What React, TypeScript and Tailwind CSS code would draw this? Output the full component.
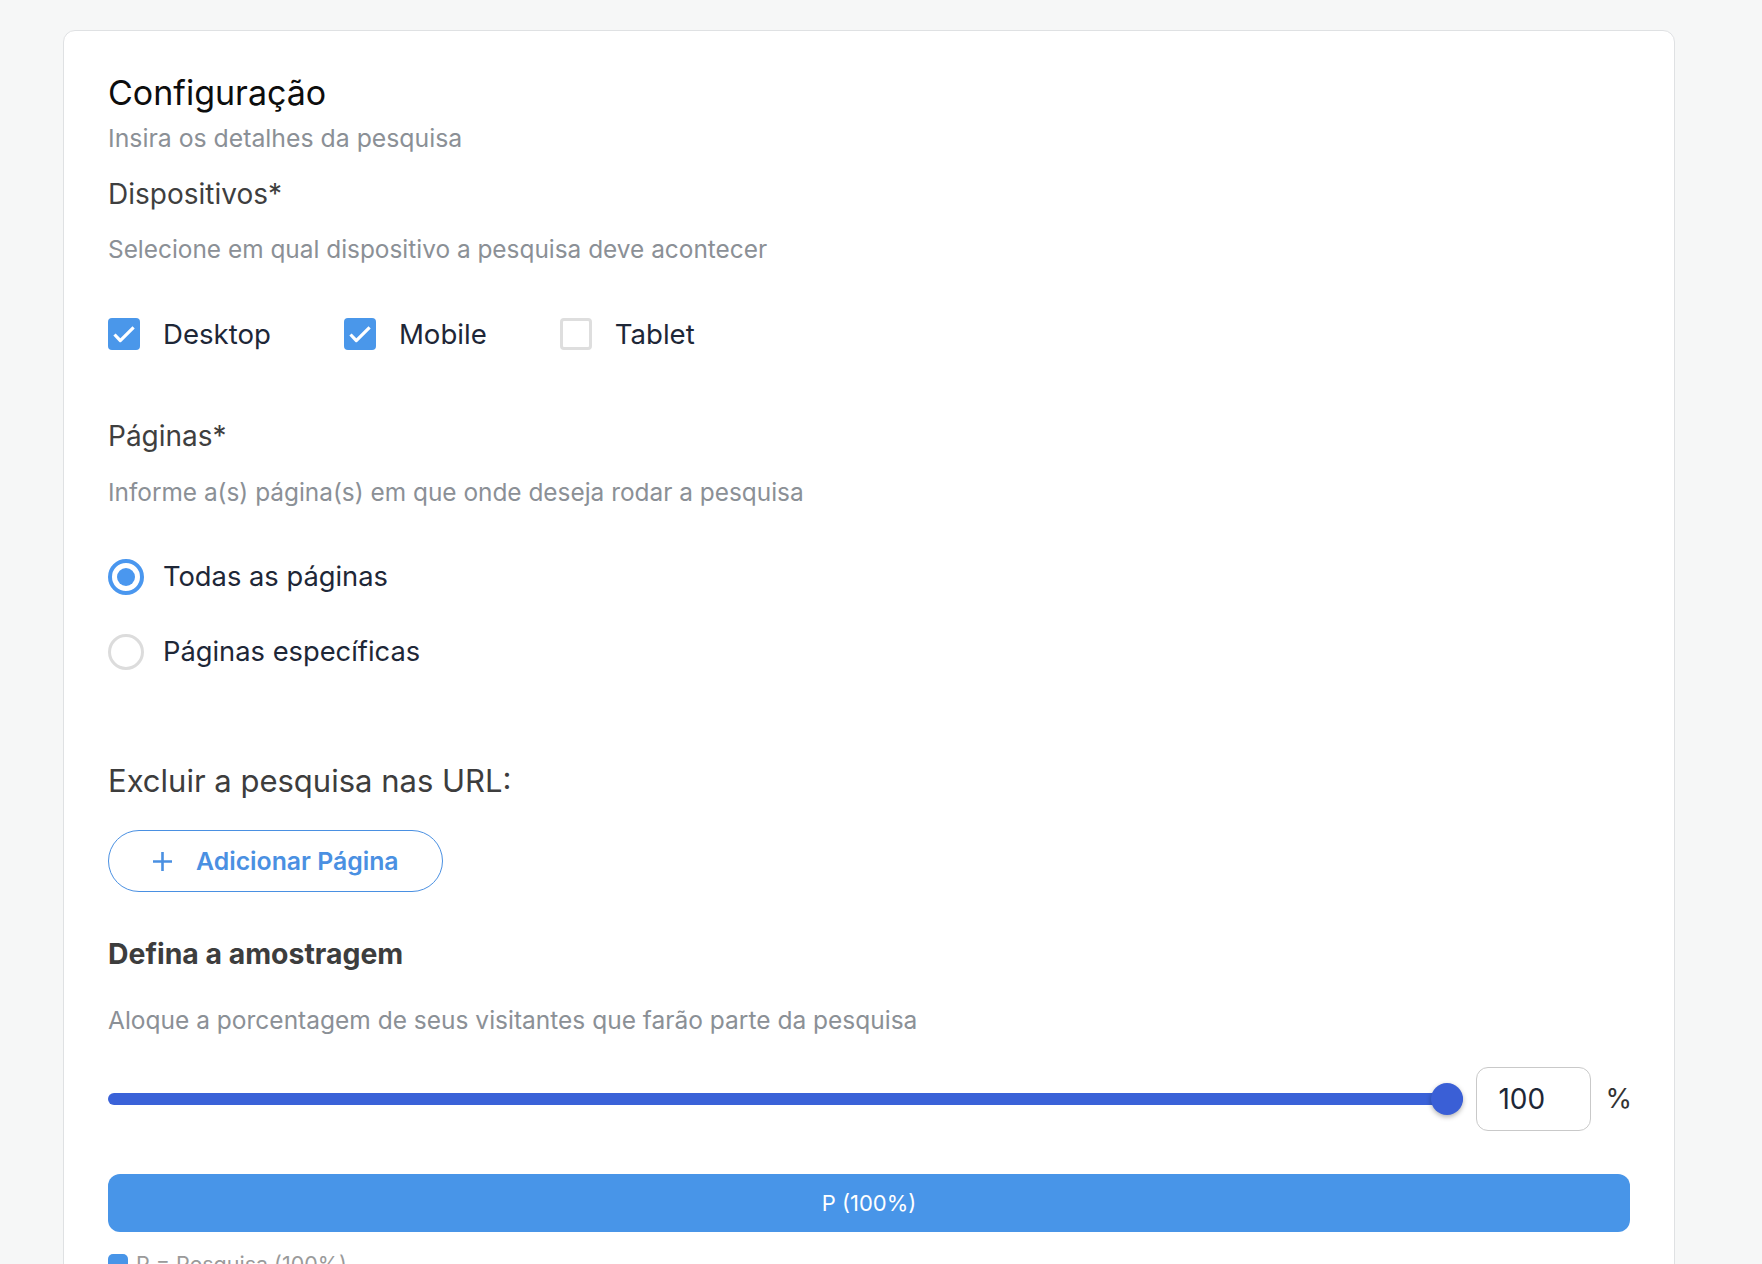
import { useState } from "react";

const font = { fontFamily: "Inter, 'Noto Sans', sans-serif" };

function Check({ checked, label }: { checked: boolean; label: string }) {
  return (
    <label className="flex items-center gap-[23px]">
      {checked ? (
        <span className="flex h-[32px] w-[32px] items-center justify-center rounded-[4px] bg-[#4a97ea]">
          <svg width="32" height="32" viewBox="0 0 32 32" fill="none">
            <path d="M6.5 16.5 12.3 22.6 25.6 9.4" stroke="#fff" strokeWidth="3.2" strokeLinejoin="round" />
          </svg>
        </span>
      ) : (
        <span className="h-[32px] w-[32px] rounded-[4px] border-[3px] border-[#dedede] bg-white" />
      )}
      <span className="text-[27.6px] leading-[32px] text-[#1e2737]">{label}</span>
    </label>
  );
}

function Radio({ selected, label }: { selected: boolean; label: string }) {
  return (
    <label className="flex h-[36px] items-center gap-[19px]">
      {selected ? (
        <span className="flex h-[36px] w-[36px] items-center justify-center rounded-full border-[4px] border-[#4a97ef] bg-white">
          <span className="h-[18px] w-[18px] rounded-full bg-[#4a97ef]" />
        </span>
      ) : (
        <span className="h-[36px] w-[36px] rounded-full border-[3px] border-[#dcdcdc] bg-white" />
      )}
      <span className="text-[27.3px] leading-[36px] text-[#1e2737]">{label}</span>
    </label>
  );
}

export default function App() {
  const [value] = useState(100);

  return (
    <div className="min-h-screen bg-[#f6f7f7] pt-[30px]" style={font}>
      <div className="ml-[63px] w-[1612px] rounded-[12px] border border-[#dfe1e3] bg-white px-[44px] pt-[42px] pb-[40px]">
        <h1 className="text-[34px] leading-[40px] text-[#0d0d0d]">Configuração</h1>
        <p className="mt-[9px] text-[24.8px] leading-[32px] text-[#8b9096]">Insira os detalhes da pesquisa</p>

        <h2 className="mt-[22px] text-[28px] leading-[36px] text-[#3f3f3f]">Dispositivos*</h2>
        <p className="mt-[21px] text-[24.4px] leading-[32px] text-[#8b9096]">
          Selecione em qual dispositivo a pesquisa deve acontecer
        </p>
        <div className="mt-[53px] flex h-[32px] items-center gap-[73px]">
          <Check checked label="Desktop" />
          <Check checked label="Mobile" />
          <Check checked={false} label="Tablet" />
        </div>

        <h2 className="mt-[68px] text-[28px] leading-[36px] text-[#3f3f3f]">Páginas*</h2>
        <p className="mt-[22px] text-[24.4px] leading-[32px] text-[#8b9096]">
          Informe a(s) página(s) em que onde deseja rodar a pesquisa
        </p>
        <div className="mt-[51px] flex flex-col gap-[39px]">
          <Radio selected label="Todas as páginas" />
          <Radio selected={false} label="Páginas específicas" />
        </div>

        <h2 className="mt-[91px] text-[31px] leading-[40px] text-[#3d3d3d]">Excluir a pesquisa nas URL:</h2>
        <button className="mt-[29px] flex h-[62px] items-center gap-[23px] rounded-full border-[1.5px] border-[#4a90e2] pl-[43px] pr-[43px]">
          <svg width="21" height="21" viewBox="0 0 21 21" fill="none">
            <path d="M10.5 1v19M1 10.5h19" stroke="#4a90e2" strokeWidth="2.6" />
          </svg>
          <span className="text-[24.8px] font-semibold leading-[32px] text-[#4a90e2]">Adicionar Página</span>
        </button>

        <h2 className="mt-[44px] text-[28.4px] font-bold leading-[36px] text-[#3d3d3d]">Defina a amostragem</h2>
        <p className="mt-[32px] text-[24.5px] leading-[32px] text-[#8b9096]">
          Aloque a porcentagem de seus visitantes que farão parte da pesquisa
        </p>

        <div className="mt-[31px] flex h-[64px] items-center">
          <div className="relative flex h-[32px] flex-1 items-center">
            <div className="h-[12px] rounded-full bg-[#3a62d8]" style={{ width: `${value}%` }} />
            <div className="absolute right-0 top-0 h-[32px] w-[32px] rounded-full bg-[#3a5fd6] shadow-[0_2px_5px_rgba(0,0,0,0.3)]" />
          </div>
          <div className="ml-[13px] flex h-[64px] w-[115px] items-center rounded-[12px] border border-[#c9c9c9] pl-[21px] text-[28px] text-[#1e2737]">
            {value}
          </div>
          <span className="ml-[14px] mr-[-2px] text-[27px] text-[#333333]">%</span>
        </div>

        <div className="mt-[43px] flex h-[58px] items-center justify-center rounded-[12px] bg-[#4895e8] text-[22px] text-white">
          P (100%)
        </div>

        <div className="mt-[18px] flex items-center gap-[8px]">
          <span className="h-[20px] w-[20px] rounded-[5px] bg-[#4895e8]" />
          <span className="text-[21.5px] leading-[28px] text-[#9a9a9a]">P = Pesquisa (100%)</span>
        </div>
      </div>
    </div>
  );
}
